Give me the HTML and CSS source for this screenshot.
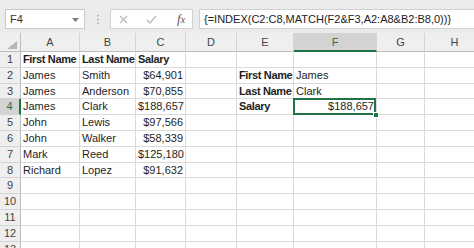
FILE: index.html
```html
<!DOCTYPE html>
<html>
<head>
<meta charset="utf-8">
<link rel="stylesheet" href="styles.css">
</head>
<body>
<div class="app">
  <div class="toolbar">
    <div class="namebox"><span class="nb-text">F4</span><svg class="nb-arrow" width="7" height="4" viewBox="0 0 7 4"><path d="M0 0H7L3.5 4Z" fill="#7a7a7a"/></svg></div>
    <div class="grip"><svg width="2" height="9" viewBox="0 0 2 9"><rect x="0" y="0" width="2" height="1.4" fill="#b4b4b4"/><rect x="0" y="3.8" width="2" height="1.4" fill="#b4b4b4"/><rect x="0" y="7.6" width="2" height="1.4" fill="#b4b4b4"/></svg></div>
    <div class="fxbox">
      <svg class="ic" width="9" height="9" viewBox="0 0 9 9"><path d="M1 1L8 8M8 1L1 8" stroke="#b9b9b9" stroke-width="1.2" fill="none"/></svg>
      <svg class="ic" width="11" height="9" viewBox="0 0 11 9"><path d="M1 5L4 8L10 1" stroke="#b9b9b9" stroke-width="1.2" fill="none"/></svg>
      <span class="fx">f<span class="fx-x">x</span></span>
    </div>
    <div class="formula">{=INDEX(C2:C8,MATCH(F2&amp;F3,A2:A8&amp;B2:B8,0))}</div>
  </div>
  <div class="sheet">
    <div class="row">
      <div class="h corner"><svg class="tri" width="10" height="8" viewBox="0 0 10 8"><path d="M10 0V8H0Z" fill="#b6b6b6"/></svg></div>
      <div class="h">A</div><div class="h">B</div><div class="h">C</div><div class="h">D</div><div class="h">E</div><div class="h hsel">F</div><div class="h">G</div><div class="h">H</div>
    </div>
    <div class="row">
      <div class="rn">1</div><div class="c b">First Name</div><div class="c b">Last Name</div><div class="c b">Salary</div><div class="c"></div><div class="c"></div><div class="c"></div><div class="c"></div><div class="c"></div>
    </div>
    <div class="row">
      <div class="rn">2</div><div class="c">James</div><div class="c">Smith</div><div class="c r">$64,901</div><div class="c"></div><div class="c b">First Name</div><div class="c">James</div><div class="c"></div><div class="c"></div>
    </div>
    <div class="row">
      <div class="rn">3</div><div class="c">James</div><div class="c">Anderson</div><div class="c r">$70,855</div><div class="c"></div><div class="c b">Last Name</div><div class="c">Clark</div><div class="c"></div><div class="c"></div>
    </div>
    <div class="row">
      <div class="rn rsel">4</div><div class="c">James</div><div class="c">Clark</div><div class="c r">$188,657</div><div class="c"></div><div class="c b">Salary</div><div class="c r sel">$188,657</div><div class="c"></div><div class="c"></div>
    </div>
    <div class="row">
      <div class="rn">5</div><div class="c">John</div><div class="c">Lewis</div><div class="c r">$97,566</div><div class="c"></div><div class="c"></div><div class="c"></div><div class="c"></div><div class="c"></div>
    </div>
    <div class="row">
      <div class="rn">6</div><div class="c">John</div><div class="c">Walker</div><div class="c r">$58,339</div><div class="c"></div><div class="c"></div><div class="c"></div><div class="c"></div><div class="c"></div>
    </div>
    <div class="row">
      <div class="rn">7</div><div class="c">Mark</div><div class="c">Reed</div><div class="c r">$125,180</div><div class="c"></div><div class="c"></div><div class="c"></div><div class="c"></div><div class="c"></div>
    </div>
    <div class="row">
      <div class="rn">8</div><div class="c">Richard</div><div class="c">Lopez</div><div class="c r">$91,632</div><div class="c"></div><div class="c"></div><div class="c"></div><div class="c"></div><div class="c"></div>
    </div>
    <div class="row">
      <div class="rn">9</div><div class="c"></div><div class="c"></div><div class="c"></div><div class="c"></div><div class="c"></div><div class="c"></div><div class="c"></div><div class="c"></div>
    </div>
    <div class="row">
      <div class="rn">10</div><div class="c"></div><div class="c"></div><div class="c"></div><div class="c"></div><div class="c"></div><div class="c"></div><div class="c"></div><div class="c"></div>
    </div>
    <div class="row">
      <div class="rn">11</div><div class="c"></div><div class="c"></div><div class="c"></div><div class="c"></div><div class="c"></div><div class="c"></div><div class="c"></div><div class="c"></div>
    </div>
    <div class="row">
      <div class="rn">12</div><div class="c"></div><div class="c"></div><div class="c"></div><div class="c"></div><div class="c"></div><div class="c"></div><div class="c"></div><div class="c"></div>
    </div>
    <div class="row">
      <div class="rn">13</div><div class="c"></div><div class="c"></div><div class="c"></div><div class="c"></div><div class="c"></div><div class="c"></div><div class="c"></div><div class="c"></div>
    </div>
  </div>
</div>
</body>
</html>
```
FILE: styles.css
```css
html, body {
  margin: 0;
  padding: 0;
  background: #ffffff;
  overflow: hidden;
}
.app {
  width: 474px;
  height: 248px;
  overflow: hidden;
  font-family: "Liberation Sans", Arial, sans-serif;
  font-size: 11px;
  color: #1e1e1e;
}
.toolbar {
  height: 33px;
  box-sizing: border-box;
  padding-top: 9px;
  background: #ebebeb;
  display: flex;
  align-items: flex-start;
}
.namebox {
  margin-left: 5px;
  width: 80px;
  height: 20px;
  box-sizing: border-box;
  border: 1px solid #c9c9c9;
  background: #fff;
  display: flex;
  align-items: center;
  justify-content: space-between;
  padding: 0 5px 0 4px;
  color: #333;
}
.nb-arrow { margin-top: 1px; }
.grip {
  width: 25px;
  height: 20px;
  display: flex;
  align-items: center;
  justify-content: center;
}
.fxbox {
  width: 83px;
  height: 20px;
  box-sizing: border-box;
  border: 1px solid #d2d2d2;
  background: #fff;
  display: flex;
  align-items: center;
  padding-left: 8px;
  gap: 18px;
}
.fx {
  font-family: "Liberation Serif", serif;
  font-style: italic;
  font-size: 13px;
  color: #555;
  margin-left: 2px;
}
.fx-x { font-size: 10px; }
.formula {
  margin-left: 6px;
  flex: 1;
  height: 20px;
  box-sizing: border-box;
  border: 1px solid #d2d2d2;
  border-right: none;
  background: #fff;
  padding-left: 4px;
  line-height: 18px;
  white-space: nowrap;
  overflow: hidden;
  color: #222;
}
.sheet {
  display: grid;
  grid-template-columns: 21px 59px 56px 50px 51px 57px 83px 48px 60px;
  grid-template-rows: 19px 16px 16px 15px 16px 16px 16px 16px 15px 16px 16px 16px 16px 16px;
}
.row { display: contents; }
.h {
  background: #efefef;
  border-right: 1px solid #d4d4d4;
  border-bottom: 1px solid #bdbdbd;
  box-sizing: border-box;
  text-align: center;
  line-height: 18px;
  color: #444;
}
.corner {
  position: relative;
  border-right-color: #bdbdbd;
}
.tri {
  position: absolute;
  right: 3px;
  bottom: 2px;
}
.hsel {
  background: #d3d3d3;
  border-bottom: 2px solid #217346;
  color: #217346;
}
.rn {
  background: #efefef;
  border-right: 1px solid #bdbdbd;
  border-bottom: 1px solid #d4d4d4;
  box-sizing: border-box;
  text-align: center;
  line-height: 15px;
  color: #444;
}
.rsel {
  background: #d3d3d3;
  border-right: 2px solid #217346;
  color: #217346;
}
.c {
  border-right: 1px solid #dadada;
  border-bottom: 1px solid #dadada;
  box-sizing: border-box;
  padding: 0 2px;
  line-height: 15px;
  white-space: nowrap;
  overflow: visible;
}
.b {
  font-weight: bold;
  letter-spacing: -0.35px;
}
.r { text-align: right; }
.sel { position: relative; }
.sel::after {
  content: "";
  position: absolute;
  left: -1px;
  top: -1px;
  right: 0;
  bottom: -1px;
  border: 2px solid #217346;
}
.sel::before {
  content: "";
  position: absolute;
  right: -3px;
  bottom: -4px;
  width: 4px;
  height: 4px;
  background: #217346;
  border: 1px solid #fff;
  z-index: 1;
}
```
